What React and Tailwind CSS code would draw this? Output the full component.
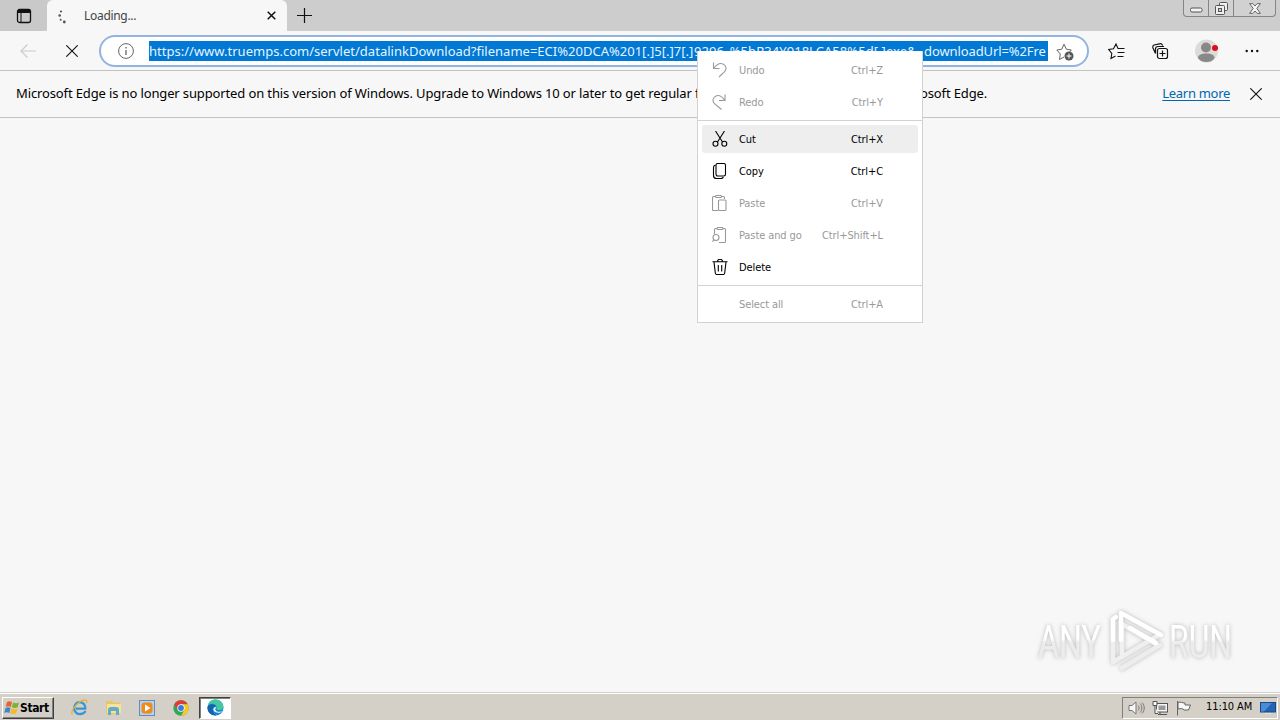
import clsx from "clsx";

const menuItems = [
  { label: "Undo", keys: "Ctrl+Z", icon: "undo", disabled: true },
  { label: "Redo", keys: "Ctrl+Y", icon: "redo", disabled: true },
  { separator: true },
  { label: "Cut", keys: "Ctrl+X", icon: "cut", active: true },
  { label: "Copy", keys: "Ctrl+C", icon: "copy" },
  { label: "Paste", keys: "Ctrl+V", icon: "paste", disabled: true },
  { label: "Paste and go", keys: "Ctrl+Shift+L", icon: "pasteGo", disabled: true },
  { label: "Delete", icon: "trash" },
  { separator: true },
  { label: "Select all", keys: "Ctrl+A", disabled: true },
];

const menuIcons = {
  undo: <path d="M1.500.5v6h6M1.800 6.200C4.500 2.500 8 .7 11 1.900c3.500 1.600 3.900 5.400 1.600 7.700L7 15" />,
  redo: <path d="M13 .5v6H7M12.700 6.200C10 2.500 7 .7 4 1.900.5 3.500.2 7.300 2.500 9.600L9.500 15.500" />,
  cut: (
    <>
      <path d="M3.500 0l7 11M12.500 0l-7 11" />
      <circle cx="3.500" cy="12.800" r="2.500" />
      <circle cx="12.300" cy="12.800" r="2.500" />
    </>
  ),
  copy: (
    <>
      <rect x="4" y=".5" width="9.500" height="12.500" rx="1.700" />
      <path d="M3.500 2C2 2.300 1.500 3 1.500 4.500v8c0 2 1 3 3 3H9c1.200 0 2-.5 2.300-1.500" />
    </>
  ),
  paste: (
    <>
      <path d="M6 15.500H1.500a1 1 0 0 1-1-1v-12a1 1 0 0 1 1-1H3.500m6 0h2a1 1 0 0 1 1 1V4" />
      <rect x="3.500" y=".5" width="6" height="2" rx="1" />
      <rect x="6.500" y="5" width="7.500" height="10.500" rx="1" />
    </>
  ),
  pasteGo: (
    <>
      <path d="M2.500 7V2.500a1 1 0 0 1 1-1H5m6 0h1.500a1 1 0 0 1 1 1v12a1 1 0 0 1-1 1H7" />
      <rect x="5" y=".5" width="6" height="2" rx="1" />
      <circle cx="4" cy="10.500" r="3" />
      <path d="M2 12.800L.3 14.700" />
    </>
  ),
  trash: (
    <path d="M.5 2.800h15M5.500 2.500C5.500 1 6.500.3 8 .3s2.500.7 2.500 2.200M2 3l1.300 11c.1 1 .6 1.500 1.500 1.500h6.400c.9 0 1.400-.5 1.500-1.500L14 3M6.300 6v6.500M9.700 6v6.500" />
  ),
};

function Cross({ className }) {
  return (
    <svg className={className} viewBox="0 0 12 12" fill="none" stroke="currentColor" strokeWidth="1.100">
      <path d="M.3.3l11.400 11.400M11.700.3L.3 11.700" />
    </svg>
  );
}

function TabStrip() {
  return (
    <div className="flex h-[31px] bg-[#cdcdcd]">
      <div className="flex h-full w-[47px] items-center justify-center rounded-br-md bg-[#c9c9c9]">
        <svg className="h-4 w-4" viewBox="0 0 16 16" fill="none" stroke="#111">
          <rect x="1.500" y="1.500" width="13" height="13" rx="2" strokeWidth="1.300" />
          <path d="M2 3.500h12" strokeWidth="3" />
          <path d="M5 4v10" />
        </svg>
      </div>
      <div className="flex w-[240px] items-center rounded-t-md bg-[#f7f7f7]">
        <svg className="ml-2.5 h-4 w-4" viewBox="0 0 16 16" fill="#555">
          <circle cx="4" cy="3.500" r="1.100" />
          <circle cx="2.700" cy="7.500" r="1.300" />
          <circle cx="3.700" cy="11.800" r="1" />
          <circle cx="7.300" cy="14" r="1.400" />
        </svg>
        <span className="ml-[11px] text-[12px] tracking-[-0.3px] text-[#444]">Loading...</span>
        <svg className="ml-auto mr-[11px] h-[9px] w-[9px]" viewBox="0 0 9 9" stroke="#111" strokeWidth="1.500">
          <path d="M.7.7l7.600 7.600M8.300.7L.7 8.300" />
        </svg>
      </div>
      <div className="flex flex-1 rounded-bl-md">
        <svg className="ml-[10px] mt-2 h-[15px] w-[15px]" viewBox="0 0 15 15" stroke="#111" strokeWidth="1.200">
          <path d="M7.500 0v15M0 7.500h15" />
        </svg>
        <div className="ml-auto mr-1 flex h-[17px] w-[93px] rounded-b border border-t-0 border-[#858585] bg-[#d1d1d1]">
          <div className="flex w-[25px] justify-center border-r border-[#858585]">
            <svg className="mt-[7px] h-[6px] w-[13px]" viewBox="0 0 13 6" fill="#f4f4f4" stroke="#555">
              <rect x=".5" y="1" width="11.500" height="4" rx="1.500" />
            </svg>
          </div>
          <div className="flex w-[25px] justify-center border-r border-[#858585]">
            <svg className="mt-[2px] h-[13px] w-[13px]" viewBox="0 0 13 13" fill="#eee" stroke="#555">
              <rect x="4.500" y=".5" width="8" height="8" rx="1" />
              <rect x=".5" y="3.500" width="9" height="9" rx="1" />
              <rect x="3.500" y="6.500" width="3" height="3" fill="#ccc" />
            </svg>
          </div>
          <div className="flex flex-1 justify-center">
            <svg className="mt-[3px] h-[11px] w-[12px]" viewBox="0 0 12 11" fill="#f4f4f4" stroke="#666">
              <path d="M.6.600h3.200L6 3l2.200-2.400h3.200L7.800 5.500l3.600 4.900H8.200L6 8l-2.200 2.400H.6l3.600-4.900z" />
            </svg>
          </div>
        </div>
      </div>
    </div>
  );
}

function Toolbar() {
  return (
    <div className="flex h-10 border-b border-[#c2c2c2] bg-[#f7f7f7]">
      <svg className="ml-5 mt-3 h-4 w-4" viewBox="0 0 16 16" fill="none" stroke="#ccc" strokeWidth="1.200">
        <path d="M16 8H1M7.500 1.500L1 8l6.500 6.500" />
      </svg>
      <Cross className="ml-[30px] mt-[14px] h-3 w-3 text-[#111]" />
      <div className="ml-[21px] mt-1 flex h-8 w-[990px] rounded-full border-2 border-[#93b4de] bg-white">
        <svg className="ml-[17px] mt-[6px] h-4 w-4" viewBox="0 0 16 16" fill="none" stroke="#666">
          <circle cx="8" cy="8" r="7.400" />
          <path d="M8 7v5M8 4v1.500" strokeWidth="1.300" />
        </svg>
        <div className="ml-[15px] mt-1 flex h-5 w-[899px] overflow-hidden whitespace-nowrap bg-[#0078d4] text-[13px] leading-5 text-[#e5f5ff]">
          <span className="w-[545px] shrink-0 tracking-[0.01px]">
            https://www.truemps.com/servlet/datalinkDownload?filename=ECI%20DCA%201[.]5[.]7[.]
          </span>
          <span className="w-[230px] shrink-0 tracking-[0.05px]">9296_%5bR34Y918LCA58%5d[.]exe&amp;</span>
          <span className="tracking-[-0.1px]">downloadUrl=%2Fre</span>
        </div>
        <svg className="ml-2 mt-[6px] h-[18px] w-[18px]" viewBox="0 0 18 18" fill="none" stroke="#666">
          <path d="M8 14l-4.500 2.500.8-5.500L.8 7l5-.8L8 1.200l2.300 5 5 .8-1.500 1.700" />
          <circle cx="13" cy="13" r="4.500" fill="#555" stroke="none" />
          <path d="M13 10.500v5M10.500 13h5" stroke="#fff" />
        </svg>
      </div>
      <svg className="ml-[19px] mt-3 h-[17px] w-[17px]" viewBox="0 0 17 17" fill="none" stroke="#111" strokeWidth="1.100">
        <path d="M7.500 13L3 15.500l.8-5L.7 6.500l4.800-.8L8 1l2 4.500h6.500M9.500 9.500h7M9.500 13.500h6" />
      </svg>
      <svg className="ml-[27px] mt-3 h-[17px] w-[17px]" viewBox="0 0 17 17" fill="none" stroke="#111" strokeWidth="1.200">
        <rect x="5.500" y="5.500" width="10" height="10" rx="2" />
        <path d="M10.500 7.500v6M7.500 10.500h6M3.500 10.500L1 5C.5 3.500 1 2.500 2 2L7.500.8C9 .5 10 1 10.700 2.500M3.500 10.500V6c0-1.600.9-2.500 2.500-2.500h6" />
      </svg>
      <svg className="ml-[26px] mt-2 h-6 w-6" viewBox="0 0 24 24">
        <circle cx="11.500" cy="12" r="11.500" fill="#dedad8" />
        <circle cx="11" cy="8.500" r="5" fill="#888" />
        <path d="M3 19c0-3 3-4.500 8.300-4.500s8.200 1.500 8.200 4.500c-2 3-5 4-8.200 4s-6-1-8.300-4z" fill="#888" />
        <circle cx="20" cy="9" r="3" fill="#e00b1c" />
      </svg>
      <svg className="ml-[26px] mt-[18px] h-1 w-[14px]" viewBox="0 0 14 4" fill="#111">
        <circle cx="1.700" cy="2" r="1.200" />
        <circle cx="7" cy="2" r="1.200" />
        <circle cx="12.300" cy="2" r="1.200" />
      </svg>
    </div>
  );
}

function InfoBar() {
  return (
    <div className="flex h-[47px] items-center whitespace-nowrap border-b border-[#c2c2c2] bg-[#f7f7f7] pl-4 text-[13px] text-black">
      <span className="w-[904px] tracking-[-0.13px]">
        Microsoft Edge is no longer supported on this version of Windows. Upgrade to Windows 10 or later to get regular f
      </span>
      <span className="tracking-[-0.13px]">osoft Edge.</span>
      <span className="ml-auto tracking-[-0.3px] text-[#0067b0] underline underline-offset-2">Learn more</span>
      <Cross className="ml-5 mr-[18px] h-3 w-3 text-[#111]" />
    </div>
  );
}

function ContextMenu() {
  return (
    <div className="absolute left-[697px] top-[51px] h-[272px] w-[226px] border border-t-0 border-[#d2d2d2] bg-white pt-[3px] font-['DejaVu_Sans_Condensed','DejaVu_Sans',sans-serif] text-[11px] font-stretch-condensed">
      {menuItems.map((item, index) =>
        item.separator ? (
          <div key={index} className="flex h-[5px] items-center">
            <div className="h-px w-full bg-[#d2d2d2]" />
          </div>
        ) : (
          <div key={index} className="h-8 px-1 py-0.5">
            <div
              className={clsx(
                "flex h-7 items-center rounded-[3px] pl-[10px] pr-[35px]",
                item.active && "bg-[#eeeeee]",
                item.disabled ? "text-[#999]" : "text-black"
              )}
            >
              <svg className="h-4 w-4" viewBox="0 0 16 16" fill="none" stroke="currentColor" strokeWidth="1.100">
                {menuIcons[item.icon]}
              </svg>
              <span className="ml-[11px] pt-0.5 tracking-[-0.1px]">{item.label}</span>
              <span className="ml-auto pt-0.5 tracking-[-0.1px]">{item.keys}</span>
            </div>
          </div>
        )
      )}
    </div>
  );
}

function Watermark() {
  return (
    <div className="absolute left-[1038px] top-[608px] flex items-center drop-shadow-[0_0_2px_rgba(0,0,0,0.25)]">
      <svg className="h-16 w-[200px]" viewBox="0 0 200 64" fill="none">
        <defs>
          <linearGradient id="wm" gradientUnits="userSpaceOnUse" x1="0" y1="0" x2="0" y2="64">
            <stop offset="0.480" stopColor="#fff" />
            <stop offset="0.540" stopColor="#ececec" />
          </linearGradient>
        </defs>
        <g fill="url(#wm)" fontFamily="Roboto, sans-serif" fontSize="47" fontWeight="400">
          <text x="0" y="50" textLength="63" lengthAdjust="spacingAndGlyphs">ANY</text>
          <text x="131" y="50" textLength="63" lengthAdjust="spacingAndGlyphs">RUN</text>
        </g>
        <g strokeLinejoin="round" strokeLinecap="round" strokeWidth="4.500">
          <path d="M75 11v43l46-27" stroke="#efefef" />
          <path d="M75 32V11l3-2" stroke="#fff" />
          <path d="M84 60l38-23" stroke="#ededed" />
          <path d="M84 48V16l34 20" stroke="#f0f0f0" />
          <path d="M83 32V5l40 22M92 20l26 15" stroke="#fff" />
        </g>
      </svg>
    </div>
  );
}

function Taskbar() {
  return (
    <div className="mt-auto flex h-7 items-center border-t border-[#d4d0c8] bg-[#d4d0c8] font-['DejaVu_Sans_Condensed','DejaVu_Sans',sans-serif] text-[11px] font-stretch-condensed text-black shadow-[inset_0_1px_0_#fff]">
      <div className="ml-0.5 mt-0.5 flex h-[22px] w-[52px] items-center border border-b-[#404040] border-l-white border-r-[#404040] border-t-white pl-px font-bold shadow-[inset_-1px_-1px_0_#808080]">
        <svg className="h-4 w-4 shrink-0" viewBox="0 0 16 16">
          <path d="M3 2c2-1.300 3.500-1 5 0L6.800 7C5 6 3.500 6 1.700 7z" fill="#e8632b" />
          <path d="M9 2.500c2 1 4 1 6 0L13.700 7.300c-2 1-4 .9-5.900 0z" fill="#7ab435" />
          <path d="M1.500 8c1.800-1 3.400-.9 5 0L5.300 13C3.500 12 2 12 .2 13z" fill="#3b86ce" />
          <path d="M7.500 8.500c2 1 4 1 6 0L12.200 13.300c-2 1-4 .8-6 0z" fill="#f5bb26" />
        </svg>
        <span className="text-[12px] tracking-[-0.4px]">Start</span>
      </div>
      <svg className="ml-[17px] mt-0.5 h-[17px] w-[17px]" viewBox="0 0 17 17" fill="none">
        <path d="M14.500 12c-2 3.500-7.500 4.200-10 1C1.500 9 4 3.500 8.500 3.200c4 0 6.300 3 5.700 6.500H5" stroke="#3598d4" strokeWidth="2.300" />
        <path d="M1.500 15.500C-1.500 12 9-.5 15 1.200c1.200.5 1 2 .3 3" stroke="#e6b23c" strokeWidth="1.300" />
      </svg>
      <svg className="ml-[17px] mt-0.5 h-[17px] w-[17px]" viewBox="0 0 17 17">
        <path d="M1 2h6l1.500 1.500H15V15H1z" fill="#e6c765" />
        <path d="M2 5h14v9H2z" fill="#f6e29b" />
        <path d="M3 16v-5c0-2 1-3 3-3h5c2 0 3 1 3 3v5h-3v-4H6v4z" fill="#62abc9" />
      </svg>
      <svg className="ml-[17px] mt-0.5 h-4 w-4" viewBox="0 0 16 16">
        <rect x=".5" y=".5" width="15" height="15" fill="#b5d1ed" stroke="#628fbd" />
        <rect x="2.500" y="2.500" width="11" height="11" rx="3" fill="#f28a17" />
        <path d="M6 4.500v7L11.500 8z" fill="#fff" />
      </svg>
      <svg className="ml-[18px] mt-0.5 h-4 w-4" viewBox="0 0 16 16">
        <circle cx="8" cy="8" r="7.700" fill="#32a852" />
        <path d="M1.300 4.200A7.700 7.700 0 0 1 14.700 4.200H8L4.700 9.900z" fill="#dd3e34" />
        <path d="M14.700 4.200A7.700 7.700 0 0 1 8 15.700L11.400 10 8 4.200z" fill="#f8c925" />
        <circle cx="8" cy="8" r="3.700" fill="#fff" />
        <circle cx="8" cy="8" r="2.900" fill="#3978e8" />
      </svg>
      <div className="ml-[10px] mt-0.5 flex h-[22px] w-8 items-center justify-center border border-b-white border-l-[#404040] border-r-white border-t-[#404040] bg-white shadow-[inset_1px_1px_0_#808080]">
        <svg className="h-[17px] w-[17px]" viewBox="0 0 17 17">
          <circle cx="8.500" cy="8.500" r="8" fill="#168bd0" />
          <path d="M.7 7C2-.5 12-2 15.700 5c2 4-1 6.500-4.500 6-1.500-.2-2-.9-1.500-2C10.300 5 4 3 .7 7z" fill="#43c8a0" />
          <path d="M.5 8c2-4 7-3.500 8.500-.5C5 7 4 13 9.500 16.500 4 17-.2 13 .5 8z" fill="#1762ad" />
          <path d="M9.500 8c-3.500 3 1 6.500 6 4-2 3-8 2-9-1-.6-2 1-3.500 3-3z" fill="#fff" />
        </svg>
      </div>
      <div className="ml-auto mr-0.5 mt-0.5 flex h-[22px] w-[156px] items-center border border-b-white border-l-[#808080] border-r-white border-t-[#808080]">
        <svg className="ml-[5px] h-4 w-[18px]" viewBox="0 0 18 16" fill="none" stroke="#777">
          <path d="M1 5.500h3L8 2v12l-4-3.500H1z" fill="#f7f7f7" />
          <path d="M10 5.500c1.500 1.500 1.500 3.500 0 5M12 3.500c2.500 2.500 2.500 6.500 0 9M14 2.500c3 3.500 3 7.500 0 11" />
        </svg>
        <svg className="ml-[6px] h-4 w-4" viewBox="0 0 16 16" fill="#f7f7f7" stroke="#555">
          <rect x="4.500" y="3.500" width="11" height="8.500" />
          <rect x="6.500" y="5.500" width="7" height="4.500" fill="#999" stroke="none" />
          <path d="M6 14.500h9M8 12v2M1 1.500v4h4v-4zM3 5.500v8h3" />
        </svg>
        <svg className="ml-2 h-4 w-4" viewBox="0 0 16 16" fill="#f7f7f7" stroke="#666">
          <path d="M2 2.500c3-1 4 .5 7 .5v2h5.500l-2 5H8c-1-1.500-3-1.800-6-1zM1.500 1v14.500" />
        </svg>
        <span className="ml-[14px] whitespace-nowrap tracking-[-0.1px]">11:10 AM</span>
        <svg className="ml-auto mr-px h-4 w-4" viewBox="0 0 16 16">
          <rect x=".5" y="2.500" width="15" height="9.500" fill="#2464b4" stroke="#174784" />
          <path d="M1 3h11L4 11.500H1z" fill="#4c8bd5" />
          <path d="M5 13.500h6" stroke="#e5e5e5" />
        </svg>
      </div>
    </div>
  );
}

export default function App() {
  return (
    <div className="relative flex h-[720px] w-[1280px] flex-col overflow-hidden bg-[#f7f7f7] font-['Noto_Sans',sans-serif]">
      <TabStrip />
      <Toolbar />
      <InfoBar />
      <Watermark />
      <Taskbar />
      <ContextMenu />
    </div>
  );
}
